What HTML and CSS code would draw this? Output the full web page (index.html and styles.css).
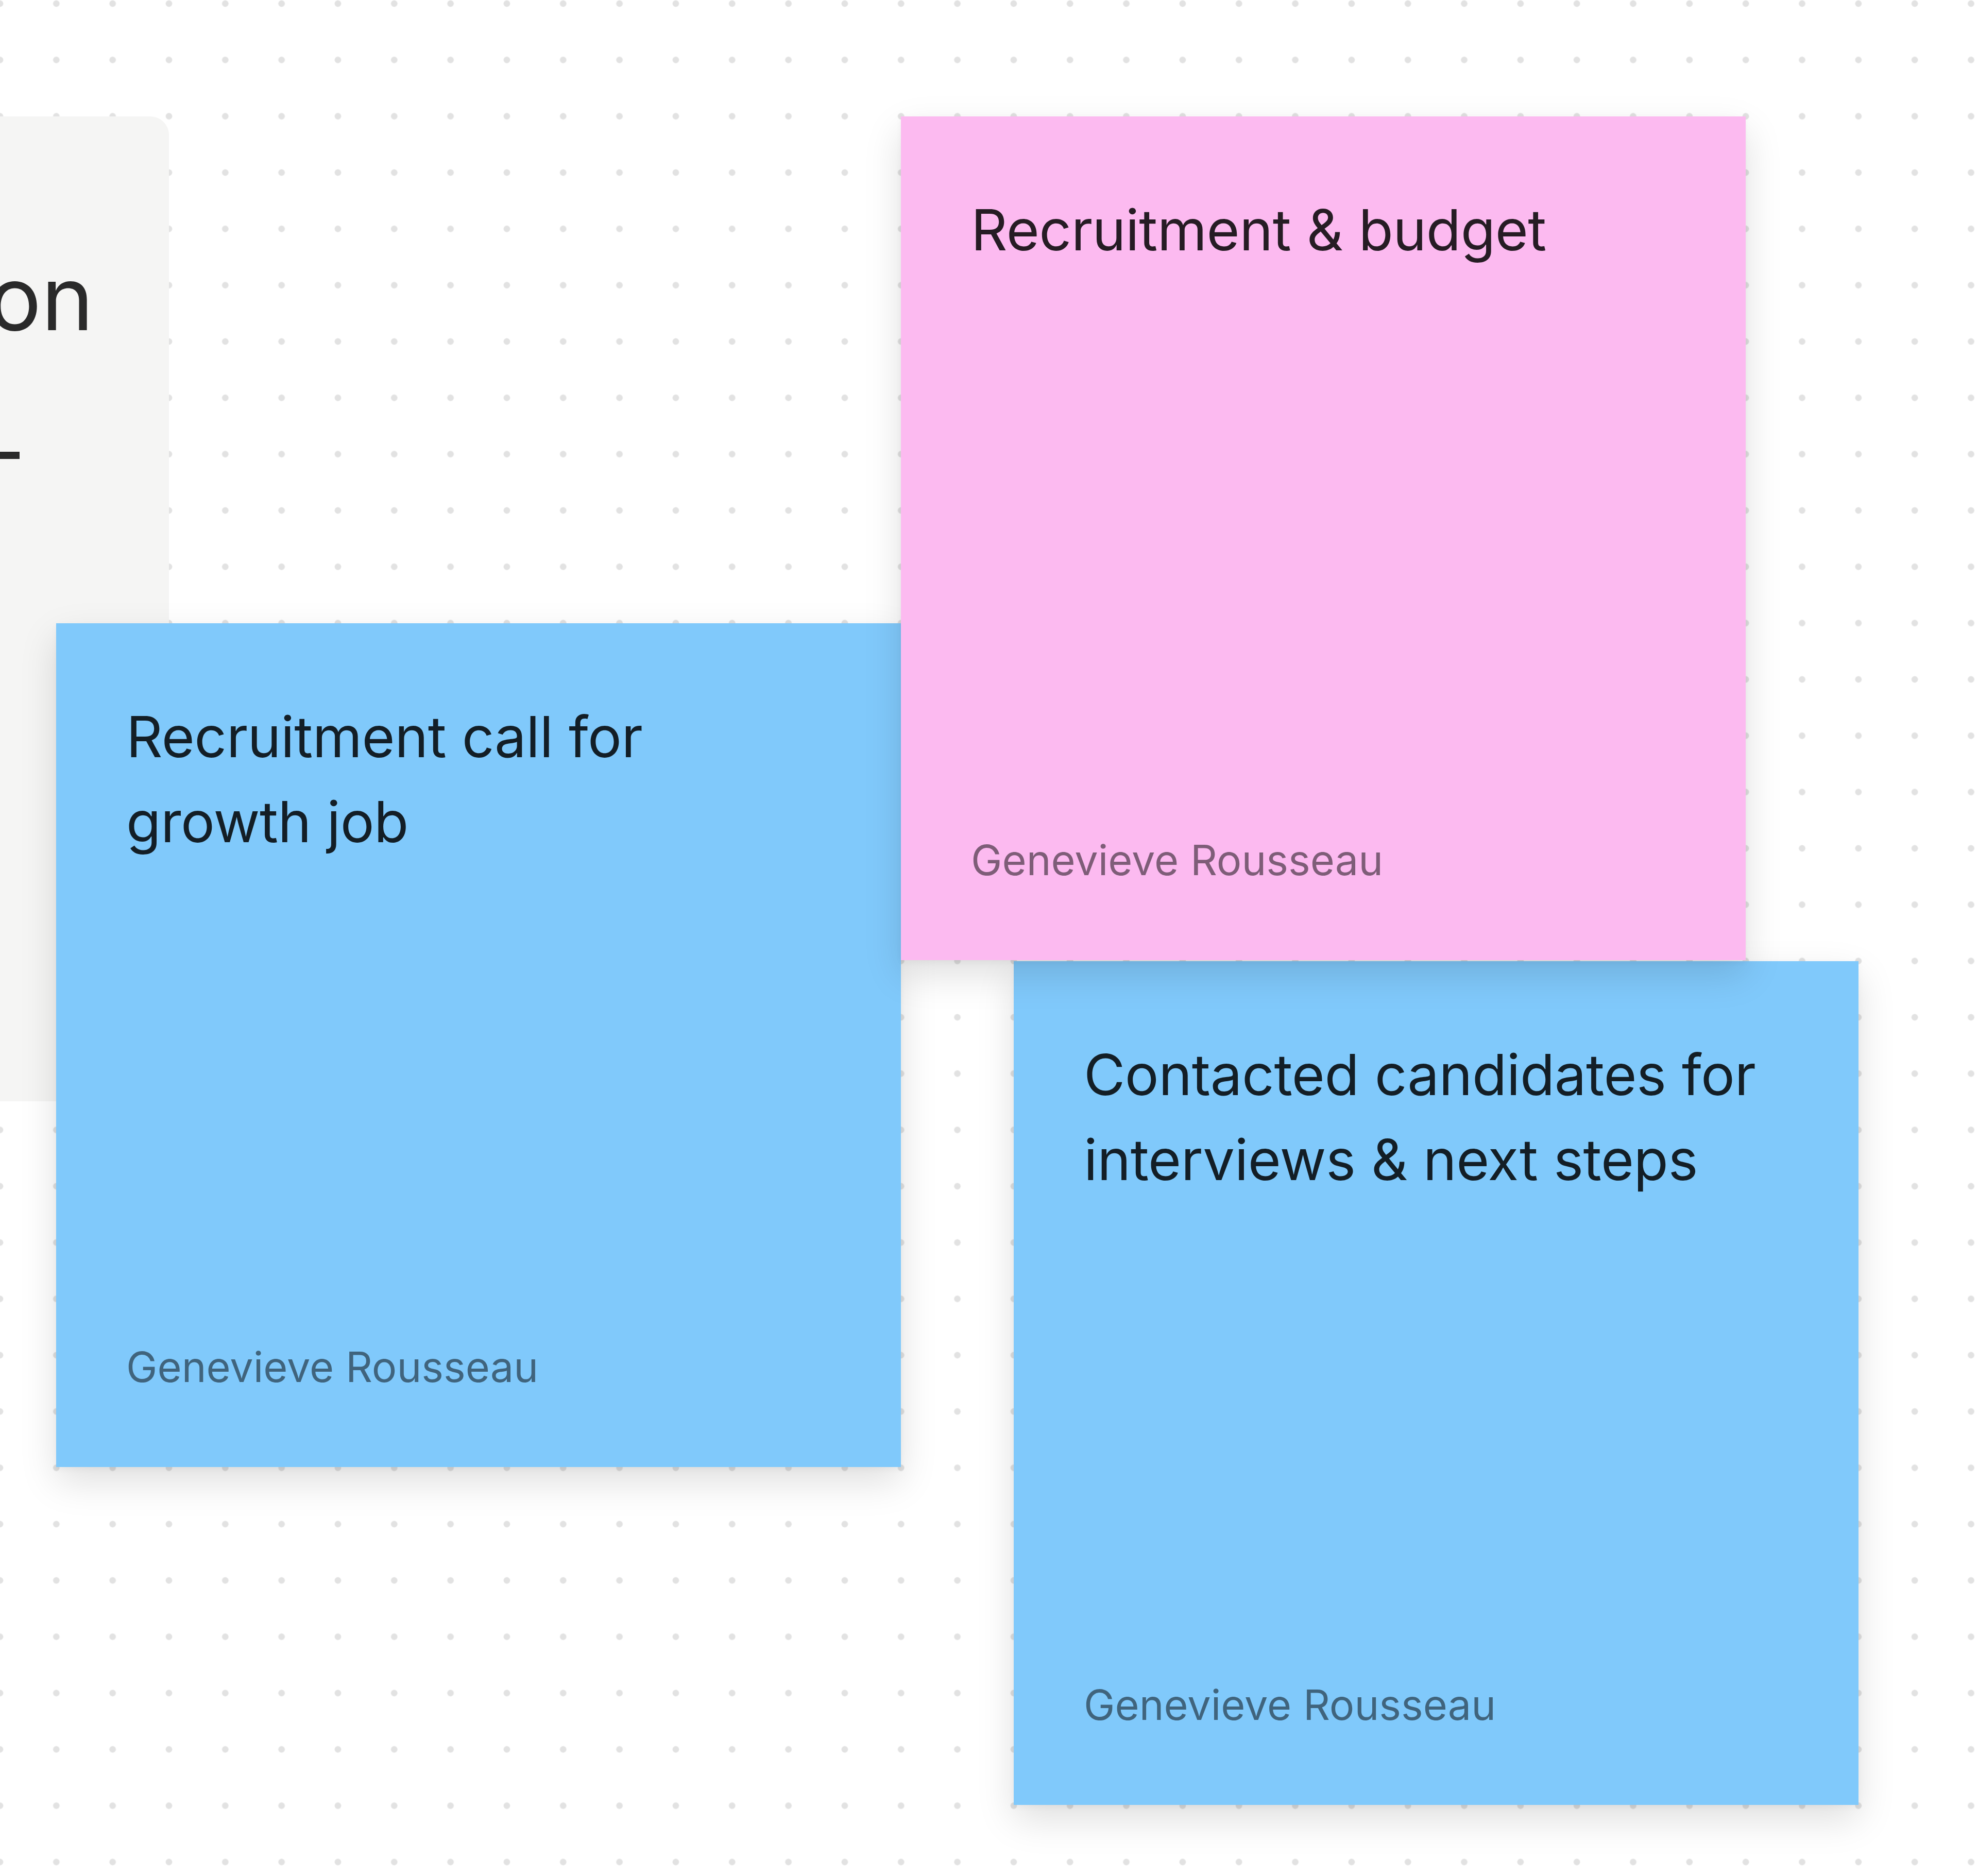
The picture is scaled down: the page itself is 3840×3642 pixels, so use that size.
FILE: index.html
```html
<!DOCTYPE html>
<html lang="en">
<head>
<meta charset="utf-8">
<title>Board</title>
<link rel="stylesheet" href="styles.css">
</head>
<body>
<main class="canvas">
  <section class="frame">
    <p class="frame-line frame-line-1">Discussion</p>
    <p class="frame-line frame-line-2">–</p>
  </section>

  <article class="note note-blue note-a">
    <h2 class="note-title">Recruitment call for growth job</h2>
    <p class="note-author">Genevieve Rousseau</p>
  </article>

  <article class="note note-blue note-c">
    <h2 class="note-title">Contacted candidates for interviews &amp; next steps</h2>
    <p class="note-author">Genevieve Rousseau</p>
  </article>

  <article class="note note-pink note-b">
    <h2 class="note-title">Recruitment &amp; budget</h2>
    <p class="note-author">Genevieve Rousseau</p>
  </article>
</main>
</body>
</html>
```

FILE: styles.css
```css
html, body {
  margin: 0;
  padding: 0;
}

body {
  width: 3840px;
  height: 3642px;
  overflow: hidden;
  background: #ffffff;
  font-family: Inter, "Noto Sans", "Liberation Sans", sans-serif;
}

.canvas {
  position: relative;
  width: 3840px;
  height: 3642px;
  background-color: #ffffff;
  background-image: radial-gradient(circle, #e2e2e2 0, #e2e2e2 5.5px, rgba(226,226,226,0) 7px);
  background-size: 109.333px 109.333px;
  background-position: -54.667px -47.667px;
}

/* grey section frame, mostly off-canvas to the left */
.frame {
  position: absolute;
  left: -900px;
  top: 226px;
  width: 1228px;
  height: 1912px;
  background: #f5f5f4;
  border-radius: 36px;
  box-sizing: border-box;
  display: flex;
  flex-direction: column;
  align-items: flex-end;
}

.frame-line {
  margin: 0;
  font-size: 172px;
  color: #2a2a2a;
  line-height: 1;
}

.frame-line-1 {
  margin-top: 266px;
  margin-right: 146px;
}

.frame-line-2 {
  margin-top: 124px;
  margin-right: 290px;
}

/* sticky notes */
.note {
  position: absolute;
  width: 1640px;
  height: 1638px;
  box-sizing: border-box;
  padding: 138px 140px 146px 136px;
  display: flex;
  flex-direction: column;
  justify-content: space-between;
  box-shadow: 0 28px 68px rgba(0, 0, 0, 0.13), 0 4px 12px rgba(0, 0, 0, 0.04);
}

.note-blue {
  background: #80c9fb;
}

.note-pink {
  background: #fcbaf0;
}

.note-a {
  left: 109px;
  top: 1210px;
  z-index: 1;
}

.note-c {
  left: 1968px;
  top: 1866px;
  z-index: 2;
}

.note-b {
  left: 1749px;
  top: 226px;
  z-index: 3;
}

.note-title {
  margin: 0;
  font-weight: 400;
  font-size: 110px;
  line-height: 165px;
  color: rgba(0, 0, 0, 0.85);
  letter-spacing: -0.5px;
}

.note-a .note-title {
  max-width: 1200px;
}

.note-author {
  margin: 0;
  font-size: 81px;
  line-height: 96px;
  color: rgba(0, 0, 0, 0.5);
}
```
